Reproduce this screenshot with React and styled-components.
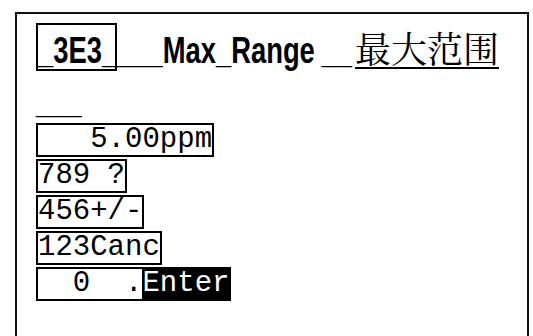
import React from "react";
import styled, { createGlobalStyle } from "styled-components";

const Global = createGlobalStyle`
  html, body { margin: 0; padding: 0; background: #fff; overflow: hidden; }
  body { width: 533px; height: 336px; }
`;

const Page = styled.div`
  padding: 12px 4px 0 15px;
  box-sizing: border-box;
  width: 533px;
  height: 336px;
  overflow: hidden;
`;

const Panel = styled.div`
  box-sizing: border-box;
  width: 514px;
  height: 340px;
  border: 2px solid #111;
  padding: 9px 0 0 19px;
  background: #fff;
`;

const titleFont = `"Liberation Sans", Arial, sans-serif`;
const monoFont = `"Courier New", "Liberation Mono", monospace`;
const cjkFont = `"Noto Serif CJK SC", "AR PL UMing CN", "Noto Sans CJK SC", serif`;

const TitleLine = styled.div`
  display: flex;
  align-items: baseline;
  font-family: ${titleFont};
  font-weight: bold;
  font-size: 37px;
  line-height: 36px;
  color: #000;
  white-space: pre;
  height: 48px;
`;

/* Condensed grotesque look: Arial-metric bold, narrowed horizontally */
const Narrow = styled.span`
  display: inline-block;
  transform: scaleX(0.74);
  transform-origin: 0 0;
  white-space: pre;
`;

const Slot = styled.span`
  display: inline-block;
  width: ${(p) => p.$w}px;
  overflow: visible;
`;

const CodeBox = styled.span`
  box-sizing: border-box;
  display: inline-block;
  width: 81px;
  height: 48px;
  border: 2px solid #000;
  padding: 8px 0 0 0;
  overflow: visible;
`;

const CjkText = styled.span`
  font-family: ${cjkFont};
  font-weight: normal;
  font-size: 36px;
  line-height: 36px;
  text-decoration: underline;
  text-decoration-thickness: 2px;
  text-underline-offset: 4px;
`;

const Underscores = styled.div`
  font-family: ${titleFont};
  font-weight: bold;
  font-size: 37px;
  line-height: 36px;
  height: 52px;
  box-sizing: border-box;
  padding-top: 12px;
  color: #000;
`;

const Keypad = styled.div`
  display: flex;
  flex-direction: column;
  align-items: flex-start;
  gap: 2px;
  font-family: ${monoFont};
  font-size: 29px;
  color: #000;
`;

const Key = styled.div`
  box-sizing: border-box;
  display: flex;
  height: 34px;
  border: 2px solid #000;
  line-height: 30px;
  white-space: pre;
`;

const Enter = styled.span`
  background: #000;
  color: #fff;
  margin: -2px -2px -2px 0;
  padding: 2px 2px 2px 0;
  line-height: 30px;
`;

export default function App() {
  return (
    <>
      <Global />
      <Page>
        <Panel>
          <TitleLine>
            <CodeBox>
              <Narrow>_3E3_</Narrow>
            </CodeBox>
            <Slot $w={197}>
              <Narrow>___Max_Range</Narrow>
            </Slot>
            <Slot $w={41}>
              <Narrow> __</Narrow>
            </Slot>
            <CjkText>最大范围</CjkText>
          </TitleLine>
          <Underscores>
            <Narrow>___</Narrow>
          </Underscores>
          <Keypad>
            <Key>{"   5.00ppm"}</Key>
            <Key>{"789 ?"}</Key>
            <Key>{"456+/-"}</Key>
            <Key>{"123Canc"}</Key>
            <Key>
              {"  0  ."}
              <Enter>Enter</Enter>
            </Key>
          </Keypad>
        </Panel>
      </Page>
    </>
  );
}
